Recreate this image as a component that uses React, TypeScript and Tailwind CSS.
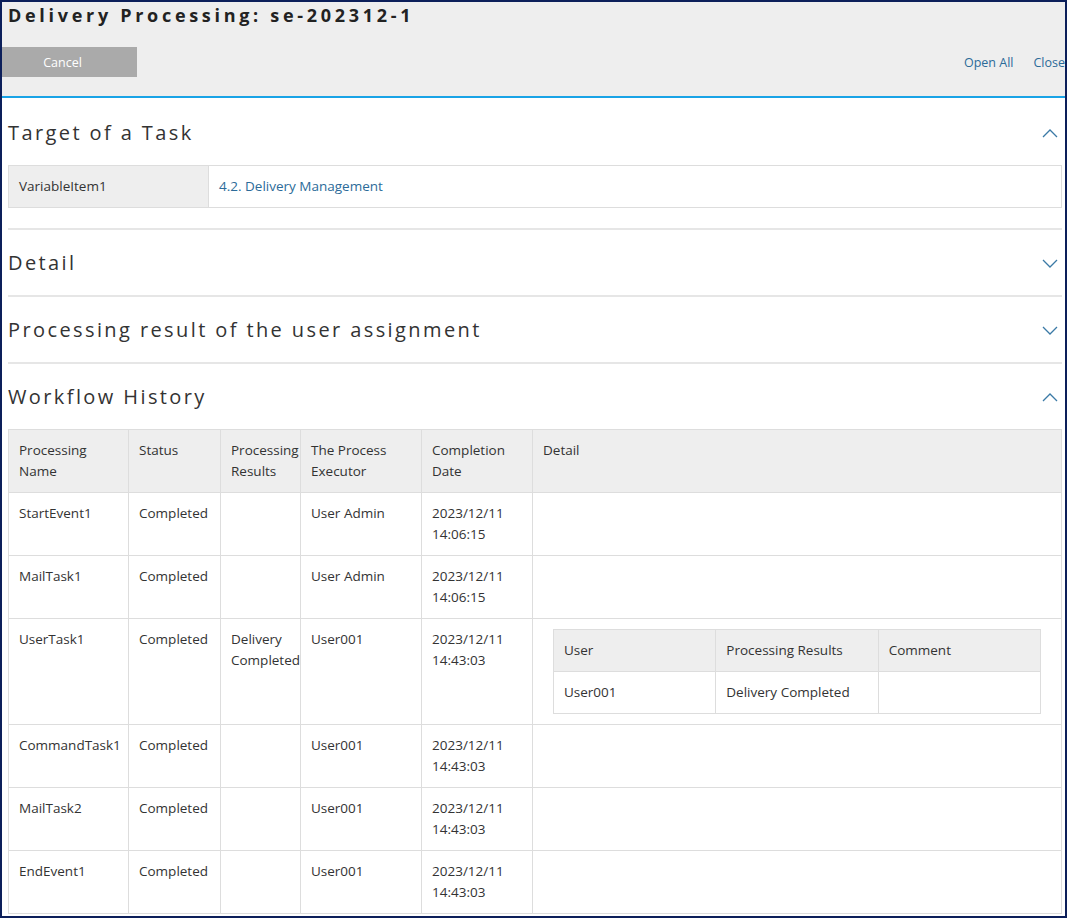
import React from 'react'

const font = { fontFamily: '"Open Sans", "Noto Sans", sans-serif' }

const Chevron = ({ up }: { up?: boolean }) => (
  <svg width="16" height="9" viewBox="0 0 16 9" className="text-[#3b7aa6]">
    <polyline
      points={up ? '1,8 8,1 15,8' : '1,1 8,8 15,1'}
      fill="none"
      stroke="currentColor"
      strokeWidth="1.3"
    />
  </svg>
)

const SectionHead = ({ title, up, first }: { title: string; up?: boolean; first?: boolean }) => (
  <div className={`flex items-center justify-between ${first ? 'pt-[22px]' : 'pt-[20px]'} pb-[19px]`}>
    <h2 className="text-[20px] leading-[26px] tracking-[2.4px] text-[#333] font-normal">{title}</h2>
    <div className="pr-[4px]">
      <Chevron up={up} />
    </div>
  </div>
)

const Sep = () => <div className="h-[2px] bg-[#e6e6e6]" />

type Row = {
  name: string
  status: string
  result?: string
  executor: string
  date: string
  time: string
  detail?: boolean
}

const rows: Row[] = [
  { name: 'StartEvent1', status: 'Completed', executor: 'User Admin', date: '2023/12/11', time: '14:06:15' },
  { name: 'MailTask1', status: 'Completed', executor: 'User Admin', date: '2023/12/11', time: '14:06:15' },
  { name: 'UserTask1', status: 'Completed', result: 'Delivery Completed', executor: 'User001', date: '2023/12/11', time: '14:43:03', detail: true },
  { name: 'CommandTask1', status: 'Completed', executor: 'User001', date: '2023/12/11', time: '14:43:03' },
  { name: 'MailTask2', status: 'Completed', executor: 'User001', date: '2023/12/11', time: '14:43:03' },
  { name: 'EndEvent1', status: 'Completed', executor: 'User001', date: '2023/12/11', time: '14:43:03' },
]

const th = 'border border-[#dddddd] bg-[#eeeeee] px-[10px] py-[10px] text-left align-top font-normal'
const td = 'border border-[#dddddd] px-[10px] py-[10px] align-top'

export default function App() {
  return (
    <div
      className="w-[1067px] h-[918px] overflow-hidden border-2 border-[#0c1f5a] bg-white text-[#333] text-[13.5px] leading-[21px]"
      style={font}
    >
      {/* header bar */}
      <div className="h-[96px] bg-[#eeeeee] border-b-2 border-[#19a3e6] flex flex-col">
        <h1 className="pl-[6px] text-[18px] leading-[26px] font-bold tracking-[3.7px] text-[#222]">
          Delivery Processing: se-202312-1
        </h1>
        <div className="mt-[19px] flex items-center justify-between">
          <button className="w-[135px] h-[30px] bg-[#aaaaaa] pr-[14px] text-white text-[12.5px]">Cancel</button>
          <div className="flex gap-[20px] text-[12.5px] text-[#2c6b99]">
            <span>Open All</span>
            <span>Close</span>
          </div>
        </div>
      </div>

      <div className="pl-[6px] pr-[3px]">
        <SectionHead title="Target of a Task" up first />
        <table className="w-full border-collapse table-fixed">
          <tbody>
            <tr>
              <td className="w-[200px] border border-[#dddddd] bg-[#eeeeee] px-[10px] py-[10px]">VariableItem1</td>
              <td className="border border-[#dddddd] px-[10px] py-[10px] text-[#2c6b99]">4.2. Delivery Management</td>
            </tr>
          </tbody>
        </table>
        <div className="h-[20px]" />
        <Sep />
        <SectionHead title="Detail" />
        <Sep />
        <SectionHead title="Processing result of the user assignment" />
        <Sep />
        <SectionHead title="Workflow History" up />

        <table className="w-full border-collapse table-fixed">
          <thead>
            <tr>
              <th className={`${th} w-[120px]`}>Processing Name</th>
              <th className={`${th} w-[92px]`}>Status</th>
              <th className={`${th} w-[80px] whitespace-nowrap`}>Processing<br />Results</th>
              <th className={`${th} w-[121px]`}>The Process Executor</th>
              <th className={`${th} w-[111px]`}>Completion Date</th>
              <th className={th}>Detail</th>
            </tr>
          </thead>
          <tbody>
            {rows.map((r) => (
              <tr key={r.name}>
                <td className={td}>{r.name}</td>
                <td className={td}>{r.status}</td>
                <td className={`${td} pr-0`}>{r.result}</td>
                <td className={td}>{r.executor}</td>
                <td className={td}>
                  {r.date}
                  <br />
                  {r.time}
                </td>
                <td className="border border-[#dddddd] px-[20px] py-[10px] align-top">
                  {r.detail ? (
                    <table className="w-full border-collapse table-fixed">
                      <thead>
                        <tr>
                          <th className={th}>User</th>
                          <th className={th}>Processing Results</th>
                          <th className={th}>Comment</th>
                        </tr>
                      </thead>
                      <tbody>
                        <tr>
                          <td className={td}>User001</td>
                          <td className={td}>Delivery Completed</td>
                          <td className={td}></td>
                        </tr>
                      </tbody>
                    </table>
                  ) : (
                    <div className="h-[42px]" />
                  )}
                </td>
              </tr>
            ))}
          </tbody>
        </table>
      </div>
    </div>
  )
}
